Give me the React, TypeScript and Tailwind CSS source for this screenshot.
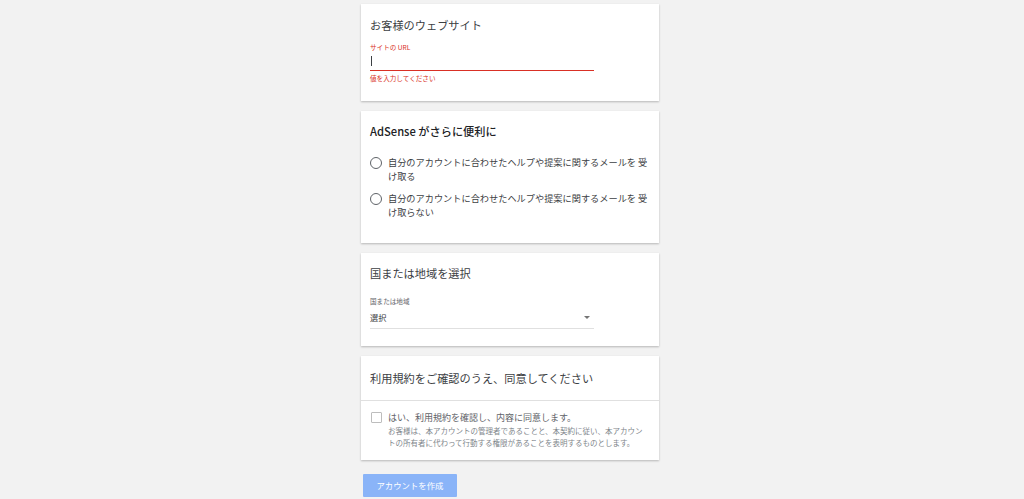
import React from 'react'

// --- 小さな部品 ---
const Card = ({ className = '', children }: { className?: string; children: React.ReactNode }) => (
    <div className={`bg-white shadow-[0_1px_2px_rgba(0,0,0,0.25)] ${className}`}>{children}</div>
)

const Radio = ({ label }: { label: string }) => (
    <div className="flex items-start">
        <span className="mt-[1px] w-[12px] h-[12px] rounded-full border-[1.3px] border-[#5f6368] shrink-0" />
        <span className="ml-[6px] text-[9.2px] leading-[13.5px] text-[#3c4043] w-[266px]">{label}</span>
    </div>
)

export default function App() {
    return (
        <div
            className="min-h-[499px] bg-[#f2f2f2] pt-[4px] pb-[2px]"
            style={{ fontFamily: '"Noto Sans CJK JP", "Noto Sans", sans-serif' }}
        >
            <div className="ml-[361px] w-[298px] flex flex-col gap-[10px]">
                {/* お客様のウェブサイト */}
                <Card className="h-[97px] pl-[9px] pt-[13px]">
                    <h2 className="text-[11.2px] leading-[16px] text-[#3c4043]">お客様のウェブサイト</h2>
                    <p className="mt-[10px] text-[6.6px] leading-[9px] text-[#d93025]">サイトの URL</p>
                    <div className="w-[224px] h-[19px] border-b-[1.5px] border-[#d93025] pt-[4px] pl-[1px]">
                        <span className="block w-[1px] h-[10px] bg-[#3c4043]" />
                    </div>
                    <p className="mt-[3px] text-[6.6px] leading-[9px] text-[#d93025]">値を入力してください</p>
                </Card>

                {/* AdSense がさらに便利に */}
                <Card className="h-[132px] pl-[9px] pt-[12px]">
                    <h2 className="text-[11.2px] leading-[16px] font-medium text-[#202124]">AdSense がさらに便利に</h2>
                    <div className="mt-[17px] flex flex-col gap-[9px]">
                        <Radio label="自分のアカウントに合わせたヘルプや提案に関するメールを 受け取る" />
                        <Radio label="自分のアカウントに合わせたヘルプや提案に関するメールを 受け取らない" />
                    </div>
                </Card>

                {/* 国または地域を選択 */}
                <Card className="h-[93px] pl-[9px] pt-[12px]">
                    <h2 className="text-[11.2px] leading-[16px] text-[#3c4043]">国または地域を選択</h2>
                    <p className="mt-[16px] text-[6.6px] leading-[9px] text-[#5f6368]">国または地域</p>
                    <div className="mt-[5px] w-[224px] h-[18px] border-b border-[#e0e0e0] flex items-start justify-between">
                        <span className="text-[8.2px] leading-[12px] text-[#3c4043]">選択</span>
                        <span className="mt-[5px] mr-[4px] w-0 h-0 border-l-[3px] border-r-[3px] border-t-[3px] border-l-transparent border-r-transparent border-t-[#757575]" />
                    </div>
                </Card>

                {/* 利用規約 */}
                <Card className="h-[104px]">
                    <div className="h-[45px] pl-[9px] pt-[14px] border-b border-[#e0e0e0]">
                        <h2 className="text-[11.2px] leading-[16px] text-[#3c4043]">利用規約をご確認のうえ、同意してください</h2>
                    </div>
                    <div className="pl-[10px] pt-[10px] flex items-start">
                        <span className="mt-[1px] w-[11px] h-[11px] border border-[#bdbdbd] rounded-[1px] shrink-0" />
                        <div className="ml-[6px]">
                            <p className="text-[9px] leading-[13px] text-[#5f6368]">はい、利用規約を確認し、内容に同意します。</p>
                            <p className="mt-[1px] w-[264px] text-[7.5px] leading-[12px] text-[#80868b]">
                                お客様は、本アカウントの管理者であることと、本契約に従い、本アカウン
                                <br />
                                トの所有者に代わって行動する権限があることを表明するものとします。
                            </p>
                        </div>
                    </div>
                </Card>

                <div className="flex pt-[4px] pl-[2px]">
                    <button className="block w-[94px] h-[23px] bg-[#8ab4f8] rounded-[1px] text-white text-[8.4px] leading-[23px]">
                        アカウントを作成
                    </button>
                </div>
            </div>
        </div>
    )
}
